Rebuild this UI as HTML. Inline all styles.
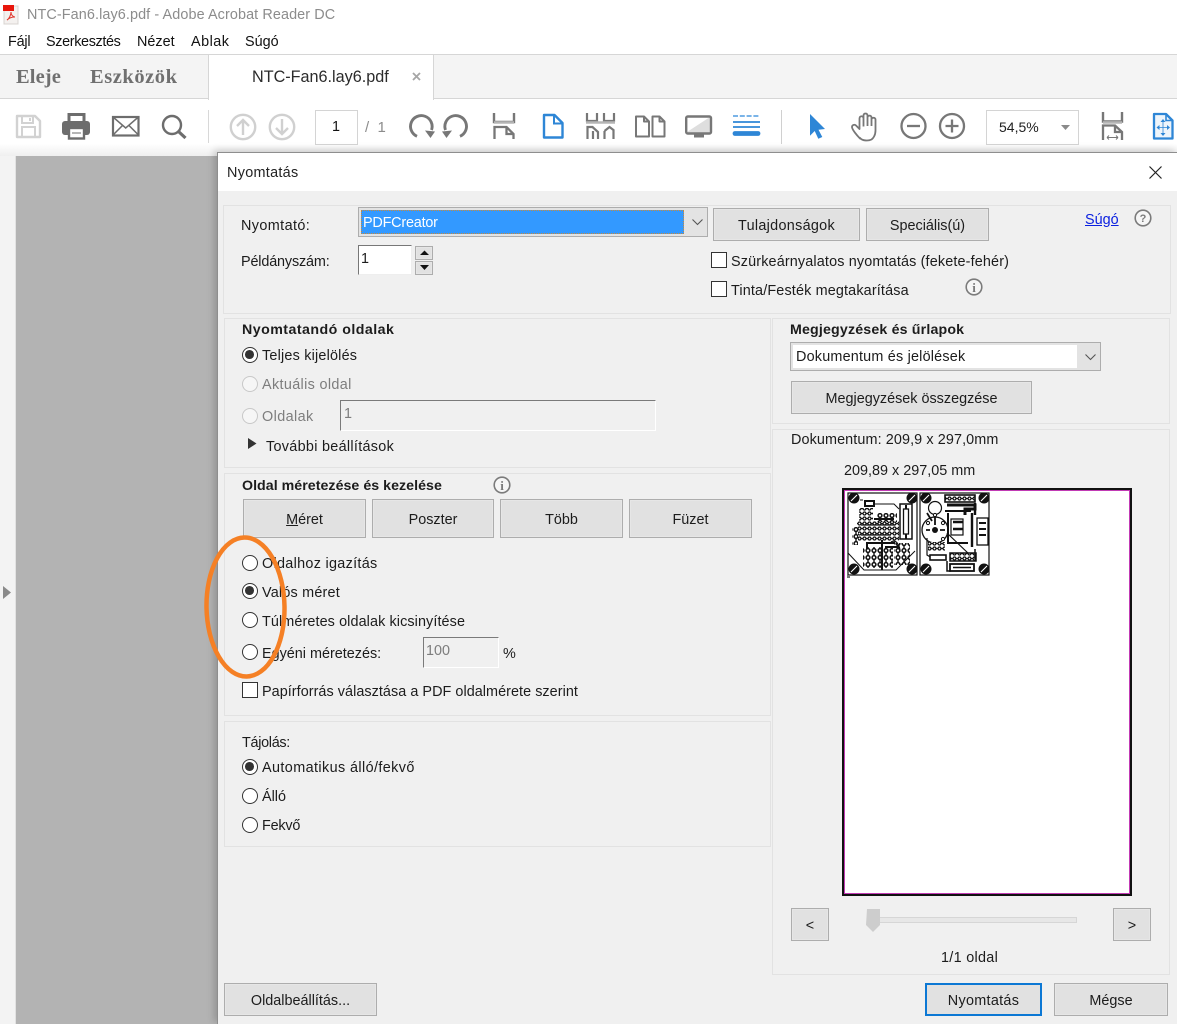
<!DOCTYPE html>
<html lang="hu"><head><meta charset="utf-8"><title>Nyomtatás</title>
<style>
html,body{margin:0;padding:0;width:1177px;height:1024px;overflow:hidden;background:#fff}
body{position:relative;font-family:"Liberation Sans",sans-serif;color:#1c1c1c}
.t{position:absolute;white-space:nowrap;line-height:20px;font-size:14.4px;margin-top:1px}
.b{font-weight:bold}
.g{color:#7d7d7d}
.box{position:absolute;box-sizing:border-box}
.panel{position:absolute;box-sizing:border-box;border:1px solid #e2e2e2}
.btn{position:absolute;box-sizing:border-box;background:#e1e1e1;border:1px solid #adadad;box-shadow:inset 0 0 0 1px #e6e6e6;text-align:center;font-size:14.4px;color:#1c1c1c;padding-top:3px}
.r{position:absolute;box-sizing:border-box;width:16px;height:16px;border:1.4px solid #333;border-radius:50%;background:#fff}
.r.on::after{content:"";position:absolute;left:2.2px;top:2.2px;width:8.8px;height:8.8px;border-radius:50%;background:#333}
.r.dis{border-color:#c8c8c8;background:#f6f6f6}
.c{position:absolute;box-sizing:border-box;width:16px;height:16px;border:1.4px solid #333;background:#fff}
svg{position:absolute;overflow:visible}
</style></head><body>

<!-- title bar -->
<svg style="left:3px;top:5px" width="16" height="20" viewBox="0 0 16 20"><rect x="1" y="1" width="14" height="18" fill="#f4f1ef" stroke="#d8d4d0"/><rect x="0" y="0" width="11" height="6" fill="#e8160c"/><path d="M4 15c2-1 4-5 4-8 0 3 2 5 4 5-3 0-6 1-8 3z" fill="none" stroke="#e0362c" stroke-width="1"/></svg>
<div class="t" style="left:27px;top:4px;font-size:14.4px;color:#8c8c8c;letter-spacing:.1px">NTC-Fan6.lay6.pdf - Adobe Acrobat Reader DC</div>
<div class="t" style="left:8px;top:31px;color:#111;letter-spacing:-.2px">Fájl</div>
<div class="t" style="left:46px;top:31px;color:#111;letter-spacing:-.35px">Szerkesztés</div>
<div class="t" style="left:137px;top:31px;color:#111">Nézet</div>
<div class="t" style="left:191px;top:31px;color:#111;letter-spacing:.5px">Ablak</div>
<div class="t" style="left:245px;top:31px;color:#111">Súgó</div>

<!-- tabs -->
<div class="box" style="left:0;top:54px;width:1177px;height:45px;background:#f4f4f4;border-top:1px solid #d6d6d6;border-bottom:1px solid #d6d6d6"></div>
<div class="box" style="left:208px;top:54px;width:226px;height:46px;background:#fff;border:1px solid #d6d6d6;border-bottom:none;border-top:1px solid #d6d6d6"></div>
<div class="t b" style="left:16px;top:65px;font-family:'Liberation Serif',serif;font-size:20.5px;color:#707070;line-height:22px;font-weight:bold;letter-spacing:.1px">Eleje</div>
<div class="t b" style="left:90px;top:65px;font-family:'Liberation Serif',serif;font-size:20.5px;color:#707070;line-height:22px;font-weight:bold;letter-spacing:.55px">Eszközök</div>
<div class="t" style="left:252px;top:66px;font-size:16.2px;color:#2b2b2b">NTC-Fan6.lay6.pdf</div>
<svg style="left:412px;top:72px" width="9" height="9"><path d="M1 1l7 7M8 1l-7 7" stroke="#a6a6a6" stroke-width="1.8"/></svg>

<!-- toolbar -->
<div class="box" style="left:0;top:100px;width:1177px;height:56px;background:linear-gradient(#fff 0,#fff 78%,#efefef 100%)"></div>
<svg style="left:0;top:100px" width="1177" height="56" viewBox="0 100 1177 56" fill="none">
<!-- save -->
<path d="M17 116h18l5 5v16H17z" stroke="#d2d2d2" stroke-width="2.4" stroke-linejoin="round"/><path d="M22 116v7h11v-7M22 137v-10h13v10" stroke="#d2d2d2" stroke-width="2"/><path d="M30 118v3" stroke="#d2d2d2" stroke-width="2"/>
<!-- print -->
<path d="M69 122v-7.500h15v7.500" stroke="#6d6d6d" stroke-width="3"/><rect x="62" y="121" width="28" height="14" rx="3" fill="#6d6d6d"/><rect x="69" y="128" width="15" height="10.500" fill="#fff" stroke="#6d6d6d" stroke-width="2.400"/><path d="M72 133h9" stroke="#6d6d6d"/>
<!-- mail -->
<rect x="113" y="117" width="25.500" height="18.500" stroke="#6d6d6d" stroke-width="2.200"/><path d="M113 117l12.700 11 12.700-11M113 135l10-10M138.500 135l-10-10" stroke="#6d6d6d" stroke-width="1.500"/>
<!-- search -->
<circle cx="172" cy="125" r="9" stroke="#6d6d6d" stroke-width="2.400"/><path d="M178.500 131.500l7 6.500" stroke="#6d6d6d" stroke-width="3.200"/>
<path d="M208.500 110v33" stroke="#d8d8d8"/>
<!-- up / down -->
<circle cx="243" cy="127" r="12.200" stroke="#d0d0d0" stroke-width="2.400"/><path d="M243 135v-15M237 126l6-6 6 6" stroke="#d0d0d0" stroke-width="2.400"/>
<circle cx="282" cy="127" r="12.200" stroke="#d0d0d0" stroke-width="2.400"/><path d="M282 119v15M276 128l6 6 6-6" stroke="#d0d0d0" stroke-width="2.400"/>
<!-- rotate -->
<path d="M417 136.300A10.800 10.800 0 1 1 431.500 130" stroke="#777" stroke-width="2.900"/><path d="M425 130.500l10 1-4.500 6.500z" fill="#777"/>
<path d="M460 136.300A10.800 10.800 0 1 0 445.500 130" stroke="#777" stroke-width="2.900"/><path d="M452 130.500l-10 1 4.500 6.500z" fill="#777"/>
<!-- fit -->
<path d="M494 113v9h20v-9" stroke="#777" stroke-width="2.400"/><path d="M494 122.500h20" stroke="#b5b5b5" stroke-width="2.500"/><path d="M494.500 139v-12h12l7 7v5M506.500 127v7h7" stroke="#777" stroke-width="2.300"/>
<!-- single page -->
<path d="M544 115h10.500l8 8v14.500h-18.500z" stroke="#2e86d6" stroke-width="2.400" stroke-linejoin="round"/><path d="M554 115v8.500h8.500" stroke="#2e86d6" stroke-width="2"/>
<!-- two-page scroll -->
<path d="M587 113v8h10v-8M604 113v8h10v-8" stroke="#777" stroke-width="2.200"/><path d="M586 122.500h29" stroke="#b5b5b5" stroke-width="2.500"/><path d="M587.500 139v-12h5l5.500 5v7M593 139v-8M604.500 139v-8M604.500 131l5-4 4 3v9" stroke="#777" stroke-width="2.200"/>
<!-- book -->
<path d="M636 116.500h8l5 5v15h-13zM652.500 116.500h7l5 5v15h-12zM644 116.500v5h5M659.500 116.500v5h5" stroke="#777" stroke-width="2" stroke-linejoin="round"/>
<!-- screen -->
<path d="M687 132l23-15v16h-23z" fill="#dedede"/><rect x="686.200" y="116.500" width="24.800" height="17" rx="1.500" stroke="#777" stroke-width="2.400"/><path d="M694 136h10" stroke="#777" stroke-width="3"/>
<!-- lines -->
<path d="M733 116h27" stroke="#4e9ce0" stroke-width="1.500" stroke-dasharray="5 1.800"/><path d="M733 122h27M733 127h27" stroke="#2e86d6" stroke-width="1.700"/><path d="M735 133.500h23" stroke="#2e86d6" stroke-width="4.800" stroke-linecap="round"/>
<path d="M781.500 110v34" stroke="#d0d0d0"/>
<!-- arrow -->
<path d="M810 114l15 15-6.500 .8 3.800 7.200-4 1.800-3.600-7.800-4.700 4.800z" fill="#2e86d6"/>
<!-- hand -->
<path d="M860 138.500c-3-3-8-9-8-11.500 0-2 2.500-3 4-1.500l3.500 3.500v-10.500c0-3 4-3 4 0v-3c0-2.700 4-2.700 4 0v2c0-2.500 4-2.500 4 0v2c0-2.300 4-2.300 4 0v11c0 5-2.500 8-4 9-3 1.500-9 1.500-11.500-1.500zM863.500 118.500v8M867.500 117v9M871.500 118v8" stroke="#777" stroke-width="1.800" stroke-linejoin="round"/>
<!-- zoom -->
<circle cx="913.500" cy="126" r="12" stroke="#777" stroke-width="2.300"/><path d="M907 126h13" stroke="#777" stroke-width="2.300"/>
<circle cx="952" cy="126" r="12" stroke="#777" stroke-width="2.300"/><path d="M945.500 126h13M952 119.500v13" stroke="#777" stroke-width="2.300"/>
<!-- fit width -->
<path d="M1103 112v9.500h19v-9.500" stroke="#777" stroke-width="2.400"/><path d="M1103 122.500h19" stroke="#b5b5b5" stroke-width="2.500"/><path d="M1103 140v-14.500h12l7 6.500v8M1115 125.500v6.500h7" stroke="#777" stroke-width="2.300"/><path d="M1107 137.500h11M1107 137.500l2-2M1107 137.500l2 2M1118 137.500l-2-2M1118 137.500l-2 2" stroke="#777"/>
<!-- right page -->
<path d="M1154 114h12l6.500 6.500v18h-18.500z" fill="#eef5fb" stroke="#2e86d6" stroke-width="2.300" stroke-linejoin="round"/><path d="M1166 114v6.500h6.500" stroke="#2e86d6" stroke-width="1.600"/><path d="M1163 119l-2.500 3h5zM1163 136l-2.500-3h5zM1156.500 127.500l3-2.500v5zM1170 127.500l-3-2.500v5z" fill="#2e86d6"/><path d="M1163 122v11M1159 127.500h8" stroke="#2e86d6" stroke-width=".8"/>
</svg>
<div class="box" style="left:315px;top:110px;width:43px;height:35px;border:1px solid #d4d4d4;background:#fff"></div>
<div class="t" style="left:332px;top:116px;font-size:14.4px;color:#111">1</div>
<div class="t" style="left:365px;top:117px;color:#8c8c8c;font-size:15px">/ &nbsp;1</div>
<div class="box" style="left:986px;top:110px;width:93px;height:35px;border:1px solid #d4d4d4;background:#fff"></div>
<div class="t" style="left:999px;top:116px;color:#222;font-size:14px">54,5%</div>
<svg style="left:1061px;top:125px" width="9" height="5"><path d="M0 0h9l-4.500 5z" fill="#8a8a8a"/></svg>

<!-- document area -->
<div class="box" style="left:0;top:156px;width:16px;height:868px;background:#f3f3f3;border-right:1px solid #e2e2e2"></div>
<div class="box" style="left:16px;top:156px;width:202px;height:868px;background:#b3b3b3"></div>
<svg style="left:3px;top:586px" width="9" height="13"><path d="M0 0l8 6.500-8 6.500z" fill="#8a8a8a"/></svg>

<!-- dialog -->
<div class="box" style="left:217px;top:152px;width:960px;height:872px;background:#f0f0f0;border-left:1px solid #8e8e8e;border-top:1px solid #8e8e8e;box-shadow:-3px -2px 7px rgba(0,0,0,.18)"></div>
<div class="box" style="left:218px;top:153px;width:959px;height:38px;background:#fff"></div>
<div class="t" style="left:227px;top:162px;color:#222;letter-spacing:.3px">Nyomtatás</div>
<svg style="left:1149px;top:166px" width="13" height="13"><path d="M.5.500l12 12M12.500.500l-12 12" stroke="#222" stroke-width="1.200"/></svg>

<!-- panels -->
<div class="panel" style="left:223px;top:205px;width:948px;height:109px"></div>
<div class="panel" style="left:224px;top:318px;width:547px;height:150px"></div>
<div class="panel" style="left:224px;top:473px;width:547px;height:243px"></div>
<div class="panel" style="left:224px;top:721px;width:547px;height:126px"></div>
<div class="panel" style="left:772px;top:318px;width:398px;height:106px"></div>
<div class="panel" style="left:772px;top:429px;width:398px;height:546px"></div>

<!-- printer row -->
<div class="t" style="left:241px;top:215px;letter-spacing:.4px">Nyomtató:</div>
<div class="box" style="left:358px;top:207px;width:350px;height:30px;background:#e3e3e3;border:1px solid #adadad"></div>
<div class="box" style="left:361px;top:210px;width:323px;height:24px;background:#3399ff;border:1px dotted #c98a3a"></div>
<div class="t" style="left:363px;top:212px;color:#fff;letter-spacing:-.2px">PDFCreator</div>
<svg style="left:692px;top:219px" width="11" height="6"><path d="M.5.500l5 5 5-5" fill="none" stroke="#555" stroke-width="1.100"/></svg>
<div class="btn" style="left:713px;top:208px;width:147px;height:33px;line-height:29px;letter-spacing:.3px">Tulajdonságok</div>
<div class="btn" style="left:866px;top:208px;width:123px;height:33px;line-height:29px">Speciális(ú)</div>
<div class="t" style="left:1085px;top:209px;color:#0a1fe0;text-decoration:underline">Súgó</div>
<svg style="left:1134px;top:209px" width="18" height="18"><circle cx="9" cy="9" r="7.800" fill="#f6f6f6" stroke="#7b7b7b" stroke-width="1.600"/><text x="9" y="13" text-anchor="middle" font-family="Liberation Sans" font-size="11" font-weight="bold" fill="#7b7b7b">?</text></svg>

<div class="t" style="left:241px;top:251px;letter-spacing:-.15px">Példányszám:</div>
<div class="box" style="left:358px;top:245px;width:54px;height:30px;background:#fff;border-top:1.500px solid #777;border-left:1.500px solid #777;border-right:1px solid #eee;border-bottom:1px solid #eee"></div>
<div class="t" style="left:361px;top:248px">1</div>
<div class="btn" style="left:415px;top:246px;width:18px;height:14px"></div>
<div class="btn" style="left:415px;top:261px;width:18px;height:14px"></div>
<svg style="left:420px;top:250px" width="9" height="21"><path d="M0 5l4.500-4.500L9 5zM0 15h9l-4.500 5z" fill="#111"/></svg>

<div class="c" style="left:711px;top:252px"></div>
<div class="t" style="left:731px;top:251px;letter-spacing:.15px">Szürkeárnyalatos nyomtatás (fekete-fehér)</div>
<div class="c" style="left:711px;top:281px"></div>
<div class="t" style="left:731px;top:280px;letter-spacing:.15px">Tinta/Festék megtakarítása</div>
<svg style="left:965px;top:278px" width="18" height="18"><circle cx="9" cy="9" r="7.800" fill="#f6f6f6" stroke="#7b7b7b" stroke-width="1.600"/><text x="9" y="14" text-anchor="middle" font-family="Liberation Serif" font-size="13" font-weight="bold" fill="#7b7b7b">i</text></svg>

<!-- pages -->
<div class="t b" style="left:242px;top:319px;font-size:14.2px;letter-spacing:.47px">Nyomtatandó oldalak</div>
<div class="r on" style="left:242px;top:347px"></div>
<div class="t" style="left:262px;top:345px;letter-spacing:.2px">Teljes kijelölés</div>
<div class="r dis" style="left:242px;top:376px"></div>
<div class="t g" style="left:262px;top:374px;letter-spacing:.35px">Aktuális oldal</div>
<div class="r dis" style="left:242px;top:408px"></div>
<div class="t g" style="left:262px;top:406px;letter-spacing:.4px">Oldalak</div>
<div class="box" style="left:340px;top:400px;width:316px;height:31px;background:#f0f0f0;border-top:1.500px solid #7a7a7a;border-left:1.500px solid #7a7a7a;border-right:1px solid #fff;border-bottom:1px solid #fff"></div>
<div class="t g" style="left:344px;top:403px">1</div>
<svg style="left:248px;top:438px" width="9" height="11"><path d="M0 0l8.500 5.500L0 11z" fill="#333"/></svg>
<div class="t" style="left:266px;top:436px;letter-spacing:.3px">További beállítások</div>

<!-- sizing -->
<div class="t b" style="left:242px;top:475px;font-size:14.2px;letter-spacing:.04px">Oldal méretezése és kezelése</div>
<svg style="left:493px;top:476px" width="18" height="18"><circle cx="9" cy="9" r="7.800" fill="#f6f6f6" stroke="#7b7b7b" stroke-width="1.600"/><text x="9" y="14" text-anchor="middle" font-family="Liberation Serif" font-size="13" font-weight="bold" fill="#7b7b7b">i</text></svg>
<div class="btn" style="left:243px;top:499px;width:123px;height:39px;line-height:35px"><u>M</u>éret</div>
<div class="btn" style="left:372px;top:499px;width:122px;height:39px;line-height:35px">Poszter</div>
<div class="btn" style="left:500px;top:499px;width:123px;height:39px;line-height:35px">Több</div>
<div class="btn" style="left:629px;top:499px;width:123px;height:39px;line-height:35px">Füzet</div>

<div class="r" style="left:242px;top:555px"></div>
<div class="t" style="left:262px;top:553px;letter-spacing:.3px">Oldalhoz igazítás</div>
<div class="r on" style="left:242px;top:583px"></div>
<div class="t" style="left:262px;top:582px;letter-spacing:.2px">Valós méret</div>
<div class="r" style="left:242px;top:612px"></div>
<div class="t" style="left:262px;top:611px;letter-spacing:.1px">Túlméretes oldalak kicsinyítése</div>
<div class="r" style="left:242px;top:644px"></div>
<div class="t" style="left:262px;top:643px">Egyéni méretezés:</div>
<div class="box" style="left:423px;top:637px;width:76px;height:31px;background:#f0f0f0;border-top:1.500px solid #7a7a7a;border-left:1.500px solid #7a7a7a;border-right:1px solid #fff;border-bottom:1px solid #fff"></div>
<div class="t g" style="left:426px;top:640px">100</div>
<div class="t" style="left:503px;top:643px">%</div>
<div class="c" style="left:242px;top:682px"></div>
<div class="t" style="left:262px;top:681px;letter-spacing:.05px">Papírforrás választása a PDF oldalmérete szerint</div>

<!-- orientation -->
<div class="t" style="left:242px;top:732px;letter-spacing:-.3px">Tájolás:</div>
<div class="r on" style="left:242px;top:759px"></div>
<div class="t" style="left:262px;top:757px;letter-spacing:.4px">Automatikus álló/fekvő</div>
<div class="r" style="left:242px;top:788px"></div>
<div class="t" style="left:262px;top:786px">Álló</div>
<div class="r" style="left:242px;top:817px"></div>
<div class="t" style="left:262px;top:815px;letter-spacing:-.2px">Fekvő</div>

<!-- comments -->
<div class="t b" style="left:790px;top:319px;font-size:14.2px;letter-spacing:.17px">Megjegyzések és űrlapok</div>
<div class="box" style="left:790px;top:342px;width:311px;height:29px;background:#e3e3e3;border:1px solid #adadad"></div>
<div class="box" style="left:793px;top:345px;width:284px;height:23px;background:#fff"></div>
<div class="t" style="left:796px;top:346px;letter-spacing:.2px">Dokumentum és jelölések</div>
<svg style="left:1085px;top:354px" width="11" height="6"><path d="M.5.500l5 5 5-5" fill="none" stroke="#555" stroke-width="1.100"/></svg>
<div class="btn" style="left:791px;top:381px;width:241px;height:33px;line-height:29px">Megjegyzések összegzése</div>

<!-- preview -->
<div class="t" style="left:791px;top:429px;letter-spacing:.1px">Dokumentum: 209,9 x 297,0mm</div>
<div class="t" style="left:844px;top:460px">209,89 x 297,05 mm</div>
<div class="box" style="left:842px;top:488px;width:290px;height:408px;background:#fff;border:2px solid #111;box-shadow:inset 0 0 0 1px #c23bb5"></div>

<svg style="left:847px;top:491px;filter:blur(.35px)" width="146" height="88" viewBox="0 0 146 88" fill="none">
<defs>
<pattern id="pd" width="5" height="5" patternUnits="userSpaceOnUse"><rect width="5" height="5" fill="#fff"/><circle cx="2.500" cy="2.500" r="1.500" fill="#fff" stroke="#111" stroke-width="1.300"/><path d="M0 2.500h1M4 2.500h1" stroke="#111" stroke-width="1"/></pattern>
<pattern id="pv" width="6" height="7" patternUnits="userSpaceOnUse"><rect width="6" height="7" fill="#fff"/><circle cx="3" cy="3.500" r="1.900" fill="#fff" stroke="#111" stroke-width="1.500"/><path d="M3 0v1.500M3 5.500V7" stroke="#111" stroke-width="1.400"/></pattern>
</defs>
<g stroke="#111">
<rect x="1" y="2" width="69" height="82" fill="#fff" stroke-width="1.200"/>
<rect x="73" y="2" width="69" height="82" fill="#fff" stroke-width="1.200"/>
<!-- left board -->
<rect x="10" y="30" width="42" height="20" fill="url(#pd)" stroke="none"/>
<rect x="12" y="17" width="14" height="14" fill="url(#pd)" stroke="none"/>
<rect x="30" y="22" width="20" height="9" fill="url(#pv)" stroke="none"/>
<rect x="16" y="56" width="30" height="21" fill="url(#pv)" stroke="none"/>
<rect x="47" y="52" width="16" height="22" fill="url(#pv)" stroke="none"/>
<rect x="5" y="36" width="6" height="18" fill="url(#pv)" stroke="none"/>
<rect x="53" y="13" width="12" height="35" fill="#fff" stroke-width="1.500"/>
<rect x="56.500" y="18" width="5" height="25" fill="#fff" stroke-width="1.300"/>
<path d="M59 14v4M59 43v5" stroke-width="2"/>
<path d="M1 62l16 17h32L68 60M16 9h-3M27 13h20l5 5" stroke-width="1"/>
<path d="M18 10h9v5h-9zM20 52h28M20 51v7M35 49v30M38 56h14M27 28h20" stroke-width="2"/>
<path d="M14 34h34M14 44h30M44 51c5-3 9 3 9 10" stroke-width="1.200"/>
<!-- right board -->
<circle cx="88" cy="17" r="6.500" fill="#fff" stroke-width="1.200"/>
<circle cx="88" cy="39" r="13" fill="#fff" stroke-width="1.300"/>
<circle cx="88" cy="39" r="3" fill="#111" stroke="none"/>
<path d="M79 39h4M93 39h5M88 26v8M85 30l-5-8" stroke-width="1.800"/>
<circle cx="88" cy="24" r="1.600" fill="#fff"/><circle cx="81" cy="32" r="1.600" fill="#fff"/><circle cx="96" cy="32" r="1.600" fill="#fff"/><circle cx="96" cy="48" r="1.600" fill="#fff"/>
<rect x="98" y="4" width="30" height="7" fill="url(#pd)" stroke-width="1.600"/>
<path d="M100 14h28v4h-10v6" stroke-width="3"/>
<path d="M98 20h26M101 22v30h20" stroke-width="2"/>
<rect x="104" y="28" width="12" height="16" fill="#fff" stroke-width="1.200"/>
<path d="M106 31h10M106 38h10" stroke-width="2.500"/>
<path d="M100 42l23 22" stroke-width="1.200"/>
<path d="M125 22v34M128 12v12" stroke-width="2.400"/>
<rect x="130" y="27" width="11" height="27" fill="#fff" stroke-width="1.300"/>
<path d="M132 32h7M132 38h7M132 44h7" stroke-width="2"/>
<rect x="81" y="51" width="17" height="9" fill="url(#pd)" stroke="none"/>
<path d="M80 47v17l5 3" stroke-width="1.200"/>
<rect x="83" y="64" width="16" height="5" fill="#fff" stroke-width="1.600"/>
<rect x="103" y="62" width="26" height="8" fill="url(#pd)" stroke-width="1.500"/>
<rect x="103" y="73" width="24" height="7" fill="#fff" stroke-width="1.800"/>
<path d="M106 76.500h18M100 70v10h4M128 58v10" stroke-width="1.500"/>
</g>
<g>
<g fill="#111">
<circle cx="7" cy="7" r="5.500"/><circle cx="65" cy="7" r="5.500"/><circle cx="7" cy="78" r="5.500"/><circle cx="65" cy="78" r="5.500"/>
<circle cx="79" cy="7" r="5.500"/><circle cx="137" cy="7" r="5.500"/><circle cx="79" cy="78" r="5.500"/><circle cx="137" cy="78" r="5.500"/>
</g>
<g stroke="#fff" stroke-width="1.100">
<path d="M4 10l6-6M62 10l6-6M4 81l6-6M62 81l6-6M76 10l6-6M134 10l6-6M76 81l6-6M134 81l6-6"/>
</g>
</g>
<rect x="0" y="84" width="3" height="3" fill="#777"/>
</svg>

<div class="btn" style="left:791px;top:908px;width:38px;height:33px;line-height:29px">&lt;</div>
<div class="btn" style="left:1113px;top:908px;width:38px;height:33px;line-height:29px">&gt;</div>
<div class="box" style="left:867px;top:917px;width:210px;height:6px;background:#e7e7e7;border:1px solid #d6d6d6"></div>
<svg style="left:866px;top:909px" width="14" height="24"><path d="M1 0h13v16l-7 7-7-7z" fill="#cdcdcd"/></svg>
<div class="t" style="left:941px;top:947px;letter-spacing:.3px">1/1 oldal</div>

<!-- bottom -->
<div class="btn" style="left:224px;top:983px;width:153px;height:33px;line-height:29px">Oldalbeállítás...</div>
<div class="btn" style="left:925px;top:983px;width:117px;height:33px;line-height:27px;border:2px solid #0c78d4;box-shadow:none;letter-spacing:.3px">Nyomtatás</div>
<div class="btn" style="left:1054px;top:983px;width:114px;height:33px;line-height:29px">Mégse</div>

<!-- annotation -->
<svg style="left:0;top:0;pointer-events:none" width="1177" height="1024"><ellipse cx="245.500" cy="607" rx="39" ry="69.500" transform="rotate(-1 245.500 607)" fill="none" stroke="#f58025" stroke-width="4.500"/></svg>
</body></html>
